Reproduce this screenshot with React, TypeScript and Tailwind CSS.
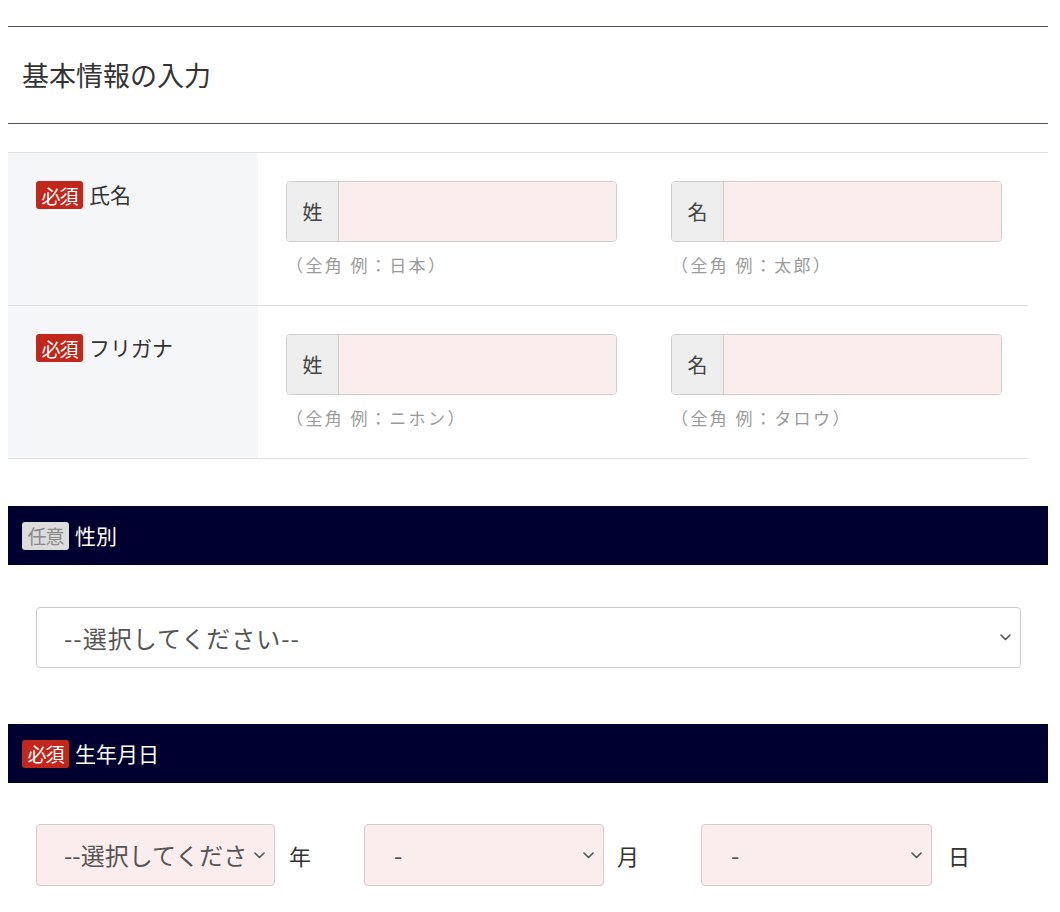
const font = { fontFamily: '"Noto Sans CJK JP", "Noto Sans", sans-serif' };

function Chevron() {
  return (
    <svg width="11" height="7" viewBox="0 0 11 7" fill="none" className="shrink-0">
      <path d="M1 1l4.5 4.5L10 1" stroke="#555" strokeWidth="1.6" strokeLinecap="round" strokeLinejoin="round" />
    </svg>
  );
}

function Badge({ optional }: { optional?: boolean }) {
  return (
    <span
      className={
        "inline-flex h-[28px] w-[47px] shrink-0 items-center justify-center rounded-[3px] text-[19px] leading-none tracking-[-1px] " +
        (optional ? "bg-[#dcdcdc] text-[#8a8a8a]" : "bg-[#c1271b] text-white")
      }
    >
      {optional ? "任意" : "必須"}
    </span>
  );
}

function InputGroup({ prefix, hint }: { prefix: string; hint: string }) {
  return (
    <div className="w-[331px]">
      <div className="flex h-[61px] overflow-hidden rounded-[4px] border border-[#d0cccc]">
        <div className="flex w-[52px] items-center justify-center border-r border-[#d0cccc] bg-[#eeeeee] text-[20px] text-[#444]">
          {prefix}
        </div>
        <div className="flex-1 bg-[#fbeded]" />
      </div>
      <p className="mt-[10px] text-[17px] leading-[26px] tracking-[2.4px] text-[#9a9a9a]">{hint}</p>
    </div>
  );
}

function Row({ label, hints }: { label: string; hints: [string, string] }) {
  return (
    <div className="flex h-[153px] w-[1020px] border-b border-[#dddddd]">
      <div className="flex w-[250px] items-start gap-[6px] bg-[#f5f6f8] pl-[28px] pt-[28px]">
        <Badge />
        <span className="text-[21px] leading-[26px] text-[#333]">{label}</span>
      </div>
      <div className="flex gap-[54px] pl-[28px] pt-[28px]">
        <InputGroup prefix="姓" hint={hints[0]} />
        <InputGroup prefix="名" hint={hints[1]} />
      </div>
    </div>
  );
}

function Bar({ label, optional }: { label: string; optional?: boolean }) {
  return (
    <div className="flex h-[59px] items-center gap-[6px] bg-[#000030] pl-[14px]">
      <Badge optional={optional} />
      <span className="text-[21px] text-white">{label}</span>
    </div>
  );
}

function FakeSelect({ text, className, tight }: { text: string; className: string; tight?: boolean }) {
  return (
    <div className={"flex items-center justify-between gap-[2px] rounded-[4px] border border-[#d0cccc] " + className}>
      <span
        className={
          "overflow-hidden whitespace-nowrap text-[24px] text-[#555] " + (tight ? "tracking-[0px]" : "tracking-[1px]")
        }
      >
        {text}
      </span>
      <Chevron />
    </div>
  );
}

export default function App() {
  return (
    <div className="min-h-[912px] w-[1060px] bg-white pl-[8px] pr-[12px] pt-[26px]" style={font}>
      {/* Title */}
      <div className="flex h-[98px] items-center border-y border-[#4f5064] pl-[14px]">
        <h2 className="text-[27px] text-[#333]">基本情報の入力</h2>
      </div>

      {/* Name table */}
      <div className="mt-[28px] border-t border-[#dddddd]">
        <Row label="氏名" hints={["（全角 例：日本）", "（全角 例：太郎）"]} />
        <Row label="フリガナ" hints={["（全角 例：ニホン）", "（全角 例：タロウ）"]} />
      </div>

      {/* Gender */}
      <div className="mt-[47px]">
        <Bar label="性別" optional />
        <div className="px-[28px] pt-[42px]">
          <FakeSelect text="--選択してください--" className="h-[61px] w-[985px] bg-white pl-[27px] pr-[9px]" />
        </div>
      </div>

      {/* Birthday */}
      <div className="mt-[56px]">
        <Bar label="生年月日" />
        <div className="flex items-center pl-[28px] pt-[41px]">
          <div className="flex w-[328px] items-center">
            <FakeSelect
              tight
              text="--選択してくださ"
              className="h-[62px] w-[239px] bg-[#fbeded] pl-[27px] pr-[9px]"
            />
            <span className="ml-[14px] text-[22px] text-[#333]">年</span>
          </div>
          <div className="flex w-[337px] items-center">
            <FakeSelect text="-" className="h-[62px] w-[240px] bg-[#fbeded] pl-[29px] pr-[9px]" />
            <span className="ml-[13px] text-[22px] text-[#333]">月</span>
          </div>
          <div className="flex items-center">
            <FakeSelect text="-" className="h-[62px] w-[231px] bg-[#fbeded] pl-[29px] pr-[9px]" />
            <span className="ml-[16px] text-[22px] text-[#333]">日</span>
          </div>
        </div>
      </div>
    </div>
  );
}
